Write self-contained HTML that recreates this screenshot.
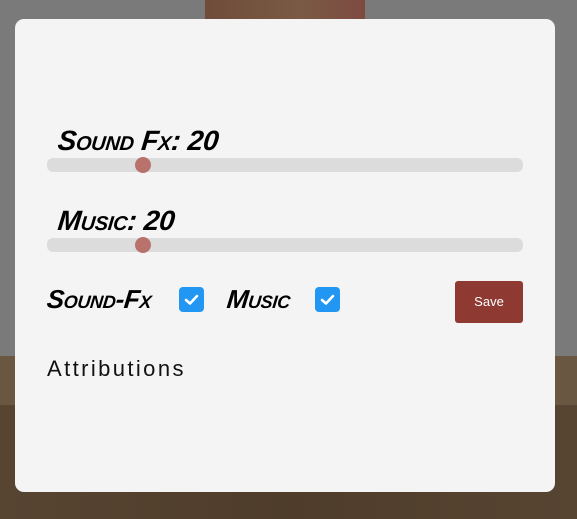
<!DOCTYPE html>
<html><head><meta charset="utf-8"><style>
html,body{margin:0;padding:0;width:577px;height:519px;overflow:hidden;position:relative;background:#7a7a7a;font-family:"Liberation Sans",sans-serif}
.wood1{position:absolute;left:0;top:356px;width:577px;height:49px;background:linear-gradient(90deg,#6a5741,#6f5a45 50%,#6a5741)}
.wood2{position:absolute;left:0;top:405px;width:577px;height:114px;background:linear-gradient(90deg,#574532,#4f3d2b 50%,#574532)}
.topimg{position:absolute;left:205px;top:0;width:160px;height:19px;background:linear-gradient(90deg,#6f4c3a,#7a5a44 60%,#7e4a40)}
.panel{position:absolute;left:15px;top:19px;width:540px;height:473px;background:#f4f4f4;border-radius:9px}
.lbl{position:absolute;font-weight:bold;font-style:italic;font-variant:small-caps;color:#000;font-size:28px;letter-spacing:-0.3px;transform:skewX(-6deg)}
.track{position:absolute;left:47px;width:476px;height:14px;background:#dcdcdc;border-radius:6px}
.thumb{position:absolute;width:16px;height:16px;border-radius:50%;background:#b8726b}
.cb{position:absolute;width:25px;height:25px;background:#2196f3;border-radius:4px}
.cb svg{position:absolute;left:5px;top:6px}
.save{position:absolute;left:455px;top:281px;width:68px;height:42px;background:#8e3a32;border-radius:3px;color:#fff;font-size:13px;text-align:center;line-height:42px}
.attr{position:absolute;left:47px;top:356px;font-size:22px;letter-spacing:2.4px;color:#111}
</style></head><body>
<div class="wood1"></div><div class="wood2"></div><div class="topimg"></div>
<div class="panel"></div>
<div class="lbl" style="left:58px;top:125px">Sound Fx: 20</div>
<div class="track" style="top:158px"></div><div class="thumb" style="left:135px;top:157px"></div>
<div class="lbl" style="left:58px;top:205px">Music: 20</div>
<div class="track" style="top:238px"></div><div class="thumb" style="left:135px;top:237px"></div>
<div class="lbl" style="left:47px;top:284px;font-size:26px">Sound-Fx</div>
<div class="cb" style="left:179px;top:287px"><svg width="15" height="13" viewBox="0 0 15 13"><path d="M2 7 L6 10.5 L13 3" stroke="#fff" stroke-width="2.6" fill="none" stroke-linecap="round" stroke-linejoin="round"/></svg></div>
<div class="lbl" style="left:227px;top:284px;font-size:26px">Music</div>
<div class="cb" style="left:315px;top:287px"><svg width="15" height="13" viewBox="0 0 15 13"><path d="M2 7 L6 10.5 L13 3" stroke="#fff" stroke-width="2.6" fill="none" stroke-linecap="round" stroke-linejoin="round"/></svg></div>
<div class="save">Save</div>
<div class="attr">Attributions</div>
</body></html>
